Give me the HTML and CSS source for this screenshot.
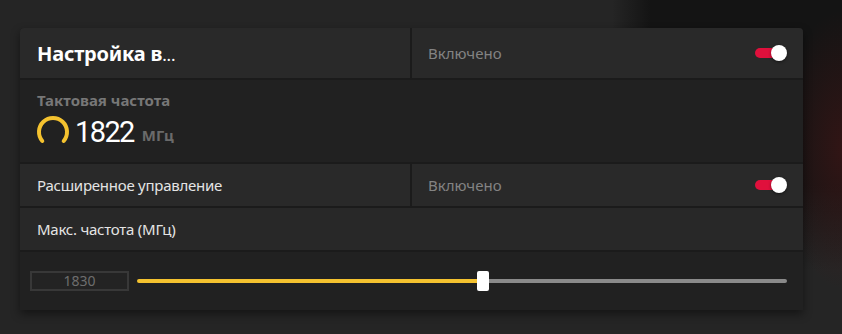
FILE: index.html
```html
<!DOCTYPE html>
<html>
<head>
  <meta charset="UTF-8">
  <title>Настройка видеокарты</title>
  <link rel="stylesheet" href="styles.css">
</head>
<body>
  <div class="panel">
    <div class="row split head-row">
      <div class="cell">
        <span class="title">Настройка в<span class="dots">...</span></span>
      </div>
      <div class="cell cell-right">
        <span class="state">Включено</span>
        <span class="toggle on"><span class="knob"></span></span>
      </div>
    </div>

    <div class="row clock-row">
      <div class="clock-label">Тактовая частота</div>
      <div class="clock-value">
        <svg class="gauge" width="34" height="34" viewBox="0 0 34 34">
          <path d="M6.3 26 A14 14 0 1 1 27.7 26" fill="none" stroke="#f4c22f" stroke-width="4" stroke-linecap="round"/>
        </svg>
        <span class="mhz">1822</span>
        <span class="unit">МГц</span>
      </div>
    </div>

    <div class="row split">
      <div class="cell">
        <span class="label">Расширенное управление</span>
      </div>
      <div class="cell cell-right">
        <span class="state">Включено</span>
        <span class="toggle on"><span class="knob"></span></span>
      </div>
    </div>

    <div class="row single">
      <span class="label">Макс. частота (МГц)</span>
    </div>

    <div class="row slider-row">
      <div class="num-box">1830</div>
      <div class="slider">
        <div class="track-fill" style="width: 52.3%"></div>
        <div class="thumb"></div>
        <div class="track-rest"></div>
      </div>
    </div>
  </div>
</body>
</html>
```

FILE: styles.css
```css
body {
  margin: 0;
  width: 842px;
  height: 334px;
  overflow: hidden;
  font-family: 'Noto Sans', 'Open Sans', sans-serif;
  color: #e6e6e6;
  background-color: #252525;
  background-image:
    radial-gradient(ellipse 60px 140px at 842px 150px, rgba(85, 22, 22, 0.45), rgba(85, 22, 22, 0)),
    linear-gradient(to bottom, #141414 185px, rgba(20, 20, 20, 0) 270px),
    linear-gradient(to right, rgba(20, 20, 20, 0), #141414);
  background-repeat: no-repeat;
  background-position: 0 0, 650px 0, 612px 0;
  background-size: 842px 334px, 192px 334px, 38px 200px;
  padding: 28px 0 0 20px;
  box-sizing: border-box;
}

.panel {
  width: 783px;
  display: flex;
  flex-direction: column;
  gap: 2px;
  background-color: #1b1b1b;
  border-radius: 4px 4px 0 0;
  overflow: hidden;
  box-shadow: 0 4px 10px rgba(0, 0, 0, 0.45);
}

.row {
  display: flex;
  align-items: center;
  box-sizing: border-box;
}

.row.split {
  display: grid;
  grid-template-columns: 390px 1fr;
  gap: 2px;
  height: 42px;
}

.head-row.split {
  height: 50px;
}

.cell {
  display: flex;
  align-items: center;
  height: 100%;
  padding: 0 16px 0 17px;
  box-sizing: border-box;
  background-color: #292929;
}

.cell-right {
  justify-content: space-between;
  padding-left: 16px;
}

.title {
  font-size: 20px;
  font-weight: 700;
  letter-spacing: -0.2px;
  color: #ffffff;
  white-space: nowrap;
}

.title .dots {
  font-weight: 400;
  font-size: 17px;
}

.state {
  font-size: 15px;
  color: #838383;
}

.label {
  font-size: 15px;
  letter-spacing: -0.25px;
  color: #e4e4e4;
}

/* переключатель */
.toggle {
  position: relative;
  width: 32px;
  height: 16px;
  display: flex;
  align-items: center;
}

.toggle::before {
  content: '';
  width: 28px;
  height: 10px;
  border-radius: 5px;
  background-color: #e0103c;
}

.toggle .knob {
  position: absolute;
  right: 0;
  top: 0;
  width: 16px;
  height: 16px;
  border-radius: 50%;
  background-color: #ffffff;
  box-shadow: 0 1px 3px rgba(0, 0, 0, 0.5);
}

.clock-row {
  height: 82px;
  background-color: #212121;
  flex-direction: column;
  align-items: flex-start;
  padding: 10px 17px 0;
}

.clock-label {
  font-size: 15px;
  font-weight: 700;
  color: #777777;
  line-height: 20px;
}

.clock-value {
  display: flex;
  align-items: center;
  margin-top: 5px;
  margin-left: -1px;
}

.gauge {
  display: block;
  margin-right: 5px;
}

.mhz {
  font-family: Roboto, 'Noto Sans', sans-serif;
  font-size: 29px;
  letter-spacing: -1.6px;
  color: #ffffff;
  line-height: 34px;
}

.unit {
  font-size: 15px;
  font-weight: 700;
  color: #6a6a6a;
  margin-left: 8px;
  margin-top: 6px;
}

.single {
  height: 42px;
  padding-left: 17px;
  background-color: #282828;
}

.slider-row {
  height: 58px;
  padding: 0 16px 0 10px;
  background-color: #212121;
}

.num-box {
  width: 99px;
  height: 20px;
  box-sizing: border-box;
  border: 2px solid #383838;
  background-color: #232323;
  color: #6e6e6e;
  font-size: 14px;
  line-height: 16px;
  text-align: center;
}

.slider {
  flex-grow: 1;
  display: flex;
  align-items: center;
  margin-left: 8px;
  height: 20px;
}

.track-fill {
  height: 4px;
  border-radius: 2px 0 0 2px;
  background-color: #f4c22f;
}

.thumb {
  width: 12px;
  height: 20px;
  border-radius: 2px;
  background-color: #ffffff;
  flex-shrink: 0;
}

.track-rest {
  flex-grow: 1;
  height: 4px;
  border-radius: 0 2px 2px 0;
  background-color: #8a8a8a;
}
```
